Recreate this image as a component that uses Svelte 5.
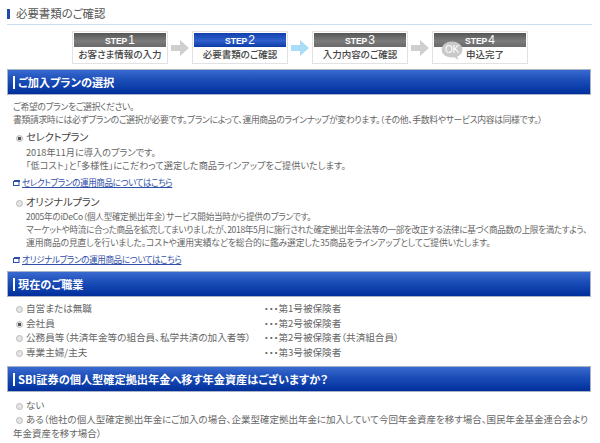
<script lang="ts">
	const steps = [
		{ num: 1, label: 'お客さま情報の入力', active: false },
		{ num: 2, label: '必要書類のご確認', active: true },
		{ num: 3, label: '入力内容のご確認', active: false },
		{ num: 4, label: '申込完了', active: false, done: true }
	];

	const jobs = [
		{ name: '自営または無職', kind: '・・・第1号被保険者', checked: false },
		{ name: '会社員', kind: '・・・第2号被保険者', checked: true },
		{ name: '公務員等（共済年金等の組合員、私学共済の加入者等）', kind: '・・・第2号被保険者（共済組合員）', checked: false },
		{ name: '専業主婦/主夫', kind: '・・・第3号被保険者', checked: false }
	];
</script>

{#snippet radio(checked: boolean)}
	<span class="radio" class:checked></span>
{/snippet}

{#snippet moreLink(text: string)}
	<a class="more" href="#top">
		<svg width="7" height="6" viewBox="0 0 7 6">
			<rect x="0.5" y="1.5" width="5.5" height="4" fill="none" stroke="#2a4fa8" stroke-width="1" />
			<rect x="1" y="0" width="6" height="2" fill="#2a4fa8" />
		</svg>
		<span>{text}</span>
	</a>
{/snippet}

<div class="page">
	<h1 class="title">必要書類のご確認</h1>

	<div class="steps">
		{#each steps as step, i}
			{#if i > 0}
				<svg class="arrow" width="18" height="16" viewBox="0 0 18 16">
					<path d="M0 5h9V0l9 8-9 8v-5H0z" fill={steps[i - 1].active ? '#a8dcf8' : '#cfcfcf'} />
				</svg>
			{/if}
			<div class="step">
				<div class="step-head" class:active={step.active}>STEP<b>{step.num}</b></div>
				<div class="step-label">{step.label}</div>
				{#if step.done}
					<svg class="ok" width="22" height="20" viewBox="0 0 22 20">
						<ellipse cx="11" cy="8.5" rx="10.5" ry="8" fill="#c9c9c9" />
						<path d="M12 15l5 4-1-6z" fill="#c9c9c9" />
						<text x="11" y="12" text-anchor="middle">OK</text>
					</svg>
				{/if}
			</div>
		{/each}
	</div>

	<h2 class="bar"><span>ご加入プランの選択</span></h2>
	<div class="intro">
		<p>ご希望のプランをご選択ください。</p>
		<p>書類請求時には必ずプランのご選択が必要です。プランによって、運用商品のラインナップが変わります。（その他、手数料やサービス内容は同様です。）</p>
	</div>

	<div class="plan">
		<div class="plan-name">{@render radio(true)}セレクトプラン</div>
		<div class="plan-body">
			<p>2018年11月に導入のプランです。</p>
			<p>「低コスト」と「多様性」にこだわって選定した商品ラインアップをご提供いたします。</p>
		</div>
	</div>
	{@render moreLink('セレクトプランの運用商品についてはこちら')}

	<div class="plan second">
		<div class="plan-name">{@render radio(false)}オリジナルプラン</div>
		<div class="plan-body">
			<p class="since">2005年のiDeCo（個人型確定拠出年金）サービス開始当時から提供のプランです。</p>
			<p class="long">マーケットや時流に合った商品を拡充してまいりましたが、2018年5月に施行された確定拠出年金法等の一部を改正する法律に基づく商品数の上限を満たすよう、</p>
			<p class="long2">運用商品の見直しを行いました。コストや運用実績などを総合的に鑑み選定した35商品をラインアップとしてご提供いたします。</p>
		</div>
	</div>
	{@render moreLink('オリジナルプランの運用商品についてはこちら')}

	<h2 class="bar job-bar"><span>現在のご職業</span></h2>
	<div class="jobs">
		{#each jobs as job}
			<div class="job">{@render radio(job.checked)}{job.name}</div>
			<div class="job">{job.kind}</div>
		{/each}
	</div>

	<h2 class="bar"><span>SBI証券の個人型確定拠出年金へ移す年金資産はございますか？</span></h2>
	<div class="assets">
		<p>{@render radio(false)}ない</p>
		<p>{@render radio(false)}ある（他社の個人型確定拠出年金にご加入の場合、企業型確定拠出年金に加入していて今回年金資産を移す場合、国民年金基金連合会より年金資産を移す場合）</p>
	</div>
</div>

<style>
	:global(body) {
		margin: 0;
		background: #fff;
	}

	.page {
		width: 600px;
		height: 443px;
		overflow: hidden;
		box-sizing: border-box;
		padding: 7px 8px 0 7px;
		font-family: 'Noto Sans CJK JP', 'Liberation Sans', sans-serif;
		font-feature-settings: 'palt';
		font-size: 8.8px;
		letter-spacing: -0.33px;
		line-height: 13px;
		color: #666;
	}

	p {
		margin: 0;
		white-space: nowrap;
	}

	.title {
		margin: -1px 0 0;
		height: 18px;
		padding-left: 9px;
		border-bottom: 1px solid #cdddf0;
		font-size: 11.4px;
		font-weight: 400;
		letter-spacing: 0;
		line-height: 14px;
		color: #555;
		position: relative;
	}

	.title::before {
		content: '';
		position: absolute;
		left: 0;
		top: 3px;
		width: 3px;
		height: 10px;
		background: #1f4aa8;
	}

	.steps {
		display: flex;
		align-items: center;
		margin: 6px 0 5px 65px;
	}

	.arrow {
		margin: 0 3px;
	}

	.step {
		position: relative;
		box-sizing: border-box;
		width: 96px;
		height: 33px;
		padding: 1px;
		border: 1px solid #e2e2e2;
	}

	.step-head {
		height: 14px;
		background:
			radial-gradient(rgba(255, 255, 255, 0.14) 0.5px, transparent 0.7px) 0 0 / 2px 2px,
			linear-gradient(#555, #7b7b7b 55%, #6a6a6a);
		color: #fff;
		font-family: 'Liberation Sans', sans-serif;
		font-size: 8.5px;
		font-weight: 700;
		letter-spacing: 0;
		line-height: 14px;
		text-align: center;
	}

	.step-head b {
		font-size: 12px;
		font-weight: 400;
		margin-left: 1px;
	}

	.step-head.active {
		background:
			radial-gradient(rgba(255, 255, 255, 0.1) 0.5px, transparent 0.7px) 0 0 / 2px 2px,
			linear-gradient(#123fae, #2f60cc 55%, #0b3ba4);
	}

	.step-label {
		font-size: 9.5px;
		font-weight: 500;
		letter-spacing: 0;
		line-height: 15px;
		text-align: center;
		color: #444;
	}

	.step:last-child .step-label {
		padding-left: 10px;
	}

	.ok {
		position: absolute;
		left: 8px;
		top: 9px;
	}

	.ok text {
		font-family: 'Liberation Sans', sans-serif;
		font-size: 10px;
		fill: #fff;
	}

	.bar {
		box-sizing: border-box;
		width: 584px;
		height: 26px;
		margin: 0;
		padding: 6px 0 0 5px;
		border: 1px solid #a9b3c6;
		background:
			radial-gradient(rgba(255, 255, 255, 0.06) 0.5px, transparent 0.7px) 0 0 / 2px 2px,
			linear-gradient(#3a6ad0, #1a4cb6 45%, #002f9c);
		color: #fff;
		font-size: 11.2px;
		font-weight: 700;
		letter-spacing: 0;
		line-height: 13px;
	}

	.bar span {
		display: block;
		border-left: 2px solid #fff;
		padding-left: 3px;
	}

	.job-bar {
		margin-top: 5px;
	}

	.intro {
		padding: 5px 0 0 6px;
	}

	.plan {
		margin: 4px 0 0 9px;
	}

	.plan.second {
		margin-top: 6px;
	}

	.plan-name {
		font-size: 10.4px;
		letter-spacing: -0.3px;
		line-height: 14px;
		color: #444;
	}

	.plan-body {
		padding-left: 10px;
		margin-top: 2px;
	}

	.plan.second .plan-body {
		margin-top: 1px;
	}

	.plan-body p {
		font-size: 9.2px;
		letter-spacing: 0;
	}

	.plan-body .since {
		font-size: 8.6px;
		letter-spacing: -0.25px;
	}

	.plan-body .long {
		font-size: 8.6px;
		letter-spacing: -0.35px;
	}

	.plan-body .long2 {
		font-size: 8.8px;
		letter-spacing: -0.15px;
	}

	.radio {
		display: inline-block;
		box-sizing: border-box;
		width: 7px;
		height: 7px;
		margin-right: 3px;
		border: 1px solid #bbb;
		border-radius: 50%;
		background: #e4e4e4;
		vertical-align: -1px;
	}

	.radio.checked {
		background: radial-gradient(circle, #555 0 1.5px, #e4e4e4 2px);
	}

	.more {
		display: flex;
		align-items: center;
		gap: 2px;
		margin: 4px 0 0 6px;
		color: #2f4fa8;
		font-size: 8.6px;
		letter-spacing: -0.42px;
		text-decoration: underline;
	}

	.jobs {
		display: grid;
		grid-template-columns: 248px 1fr;
		padding: 4px 0 7px 9px;
		font-size: 9.6px;
		letter-spacing: 0;
		line-height: 14.5px;
	}

	.assets {
		padding: 6px 0 0 6px;
		font-size: 9.5px;
		letter-spacing: 0;
		line-height: 14px;
	}

	.assets p {
		white-space: normal;
	}

	.assets p:first-child {
		padding-left: 3px;
	}

	.assets p:last-child {
		text-indent: 3px;
	}
</style>
